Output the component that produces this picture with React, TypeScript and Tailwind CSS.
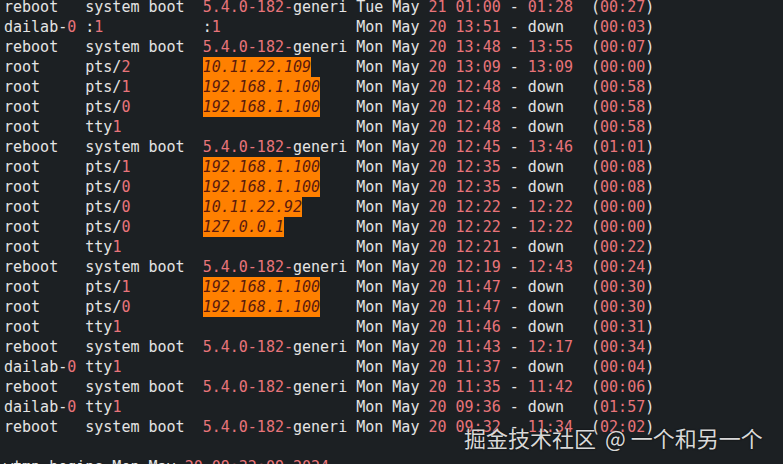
import React from 'react';

type Row = {
  user: string;
  tty: string;
  host: string;
  day: string;
  date: string;
  start: string;
  end: string;
  dur: string;
};

const rows: Row[] = [
  { user: 'reboot', tty: 'system boot', host: '5.4.0-182-generi', day: 'Tue', date: '21', start: '01:00', end: '01:28', dur: '00:27' },
  { user: 'dailab-0', tty: ':1', host: ':1', day: 'Mon', date: '20', start: '13:51', end: 'down', dur: '00:03' },
  { user: 'reboot', tty: 'system boot', host: '5.4.0-182-generi', day: 'Mon', date: '20', start: '13:48', end: '13:55', dur: '00:07' },
  { user: 'root', tty: 'pts/2', host: '10.11.22.109', day: 'Mon', date: '20', start: '13:09', end: '13:09', dur: '00:00' },
  { user: 'root', tty: 'pts/1', host: '192.168.1.100', day: 'Mon', date: '20', start: '12:48', end: 'down', dur: '00:58' },
  { user: 'root', tty: 'pts/0', host: '192.168.1.100', day: 'Mon', date: '20', start: '12:48', end: 'down', dur: '00:58' },
  { user: 'root', tty: 'tty1', host: '', day: 'Mon', date: '20', start: '12:48', end: 'down', dur: '00:58' },
  { user: 'reboot', tty: 'system boot', host: '5.4.0-182-generi', day: 'Mon', date: '20', start: '12:45', end: '13:46', dur: '01:01' },
  { user: 'root', tty: 'pts/1', host: '192.168.1.100', day: 'Mon', date: '20', start: '12:35', end: 'down', dur: '00:08' },
  { user: 'root', tty: 'pts/0', host: '192.168.1.100', day: 'Mon', date: '20', start: '12:35', end: 'down', dur: '00:08' },
  { user: 'root', tty: 'pts/0', host: '10.11.22.92', day: 'Mon', date: '20', start: '12:22', end: '12:22', dur: '00:00' },
  { user: 'root', tty: 'pts/0', host: '127.0.0.1', day: 'Mon', date: '20', start: '12:22', end: '12:22', dur: '00:00' },
  { user: 'root', tty: 'tty1', host: '', day: 'Mon', date: '20', start: '12:21', end: 'down', dur: '00:22' },
  { user: 'reboot', tty: 'system boot', host: '5.4.0-182-generi', day: 'Mon', date: '20', start: '12:19', end: '12:43', dur: '00:24' },
  { user: 'root', tty: 'pts/1', host: '192.168.1.100', day: 'Mon', date: '20', start: '11:47', end: 'down', dur: '00:30' },
  { user: 'root', tty: 'pts/0', host: '192.168.1.100', day: 'Mon', date: '20', start: '11:47', end: 'down', dur: '00:30' },
  { user: 'root', tty: 'tty1', host: '', day: 'Mon', date: '20', start: '11:46', end: 'down', dur: '00:31' },
  { user: 'reboot', tty: 'system boot', host: '5.4.0-182-generi', day: 'Mon', date: '20', start: '11:43', end: '12:17', dur: '00:34' },
  { user: 'dailab-0', tty: 'tty1', host: '', day: 'Mon', date: '20', start: '11:37', end: 'down', dur: '00:04' },
  { user: 'reboot', tty: 'system boot', host: '5.4.0-182-generi', day: 'Mon', date: '20', start: '11:35', end: '11:42', dur: '00:06' },
  { user: 'dailab-0', tty: 'tty1', host: '', day: 'Mon', date: '20', start: '09:36', end: 'down', dur: '01:57' },
  { user: 'reboot', tty: 'system boot', host: '5.4.0-182-generi', day: 'Mon', date: '20', start: '09:32', end: '11:34', dur: '02:02' },
];

const R = ({ children }: { children: React.ReactNode }) => (
  <span className="text-[#e8747a]">{children}</span>
);

// split a word into its leading text and trailing digit, digit in red
const Tail = ({ text }: { text: string }) => {
  const m = text.match(/^(.*?)(\d+)$/);
  if (!m) return <>{text}</>;
  return (
    <>
      {m[1]}
      <R>{m[2]}</R>
    </>
  );
};

const Host = ({ host }: { host: string }) => {
  const pad = ' '.repeat(Math.max(0, 16 - host.length));
  if (host.startsWith('5.4.0')) {
    return (
      <>
        <R>5.4.0-182-</R>generi{pad}
      </>
    );
  }
  if (/^\d/.test(host)) {
    return (
      <>
        <span className="inline-block h-5 align-top bg-[#ff8000] text-[#5b1a0e] italic">{host}</span>
        {pad}
      </>
    );
  }
  return (
    <>
      <Tail text={host} />
      {pad}
    </>
  );
};

const Line = ({ row }: { row: Row }) => (
  <div className="h-5 leading-5">
    <Tail text={row.user} />
    {' '.repeat(9 - row.user.length)}
    <Tail text={row.tty} />
    {' '.repeat(13 - row.tty.length)}
    <Host host={row.host} /> {row.day} May <R>{row.date}</R> <R>{row.start}</R> -{' '}
    {row.end === 'down' ? 'down ' : <R>{row.end}</R>}  (<R>{row.dur}</R>)
  </div>
);

export default function App() {
  return (
    <div className="relative w-[783px] h-[464px] overflow-hidden bg-[#1c2023]">
      <div
        className="mt-[-3px] pl-1 whitespace-pre text-[15px] text-[#e4e4e4]"
        style={{ fontFamily: '"DejaVu Sans Mono", "Liberation Mono", monospace' }}
      >
        {rows.map((row, i) => (
          <Line key={i} row={row} />
        ))}
        <div className="h-5" />
        <div className="h-5 leading-5">
          wtmp begins Mon May <R>20 09:32:09 2024</R>
        </div>
      </div>
      <div
        className="absolute left-[464px] top-[423px] text-[22px] leading-7 text-[#d8d8d8] whitespace-pre [text-shadow:0_0_2px_rgba(0,0,0,0.8)]"
        style={{ fontFamily: '"Noto Sans CJK SC", "Noto Sans", sans-serif' }}
      >
        掘金技术社区 <span className="ml-1">@</span> 一个和另一个
      </div>
    </div>
  );
}
